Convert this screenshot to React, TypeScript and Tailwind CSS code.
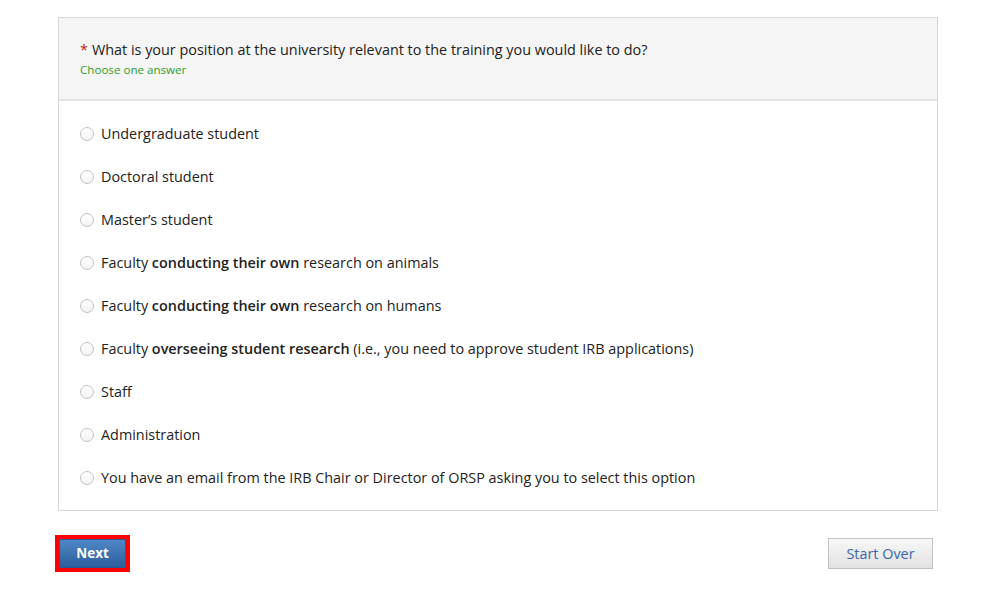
const options: { text: React.ReactNode }[] = [
  { text: "Undergraduate student" },
  { text: "Doctoral student" },
  { text: "Master’s student" },
  {
    text: (
      <>
        Faculty <b className="font-semibold">conducting their own</b> research on animals
      </>
    ),
  },
  {
    text: (
      <>
        Faculty <b className="font-semibold">conducting their own</b> research on humans
      </>
    ),
  },
  {
    text: (
      <>
        Faculty <b className="font-semibold">overseeing student research</b> (i.e., you need to approve student IRB
        applications)
      </>
    ),
  },
  { text: "Staff" },
  { text: "Administration" },
  { text: "You have an email from the IRB Chair or Director of ORSP asking you to select this option" },
];

const App = () => {
  return (
    <div className="w-full min-h-[603px] bg-white font-['Open_Sans','Liberation_Sans',sans-serif] text-[#222]">
      <div className="ml-[58px] w-[880px] pt-[17px]">
        <div className="border border-[#d6d6d6]">
          <div className="bg-[#f5f5f5] border-b-2 border-[#e3e3e3] px-[21px] pt-[22px] pb-[21px]">
            <div className="text-[14.4px] leading-[20px]">
              <span className="text-[#b81c1c] mr-1">*</span>What is your position at the university relevant to the
              training you would like to do?
            </div>
            <div className="text-[11.6px] leading-[17px] pt-[1px] text-[#2ca02c]">Choose one answer</div>
          </div>
          <div className="pt-[11px] pb-[11px] pl-[21px]">
            {options.map((o, i) => (
              <label key={i} className="flex items-center h-[43px] text-[14.4px] cursor-pointer">
                <span className="w-[14px] h-[14px] rounded-full border border-[#c2c2c2] bg-gradient-to-b from-white to-[#f3f3f3] mr-[7px] shrink-0" />
                <span>{o.text}</span>
              </label>
            ))}
          </div>
        </div>
        <div className="flex items-center justify-between mt-[24px]">
          <div className="-ml-[3px] border-[4px] border-[#ff0000] p-0">
            <button className="w-[67px] h-[29px] bg-gradient-to-b from-[#4f87c6] to-[#2c5f9c] text-white font-bold text-[13.5px] border border-[#2a5a94]">
              Next
            </button>
          </div>
          <button className="mr-[5px] w-[105px] h-[31px] bg-gradient-to-b from-[#f7f7f7] to-[#e2e2e2] border border-[#c2c2c2] text-[#3b66a6] text-[14.4px]">
            Start Over
          </button>
        </div>
      </div>
    </div>
  );
};

export default App;
